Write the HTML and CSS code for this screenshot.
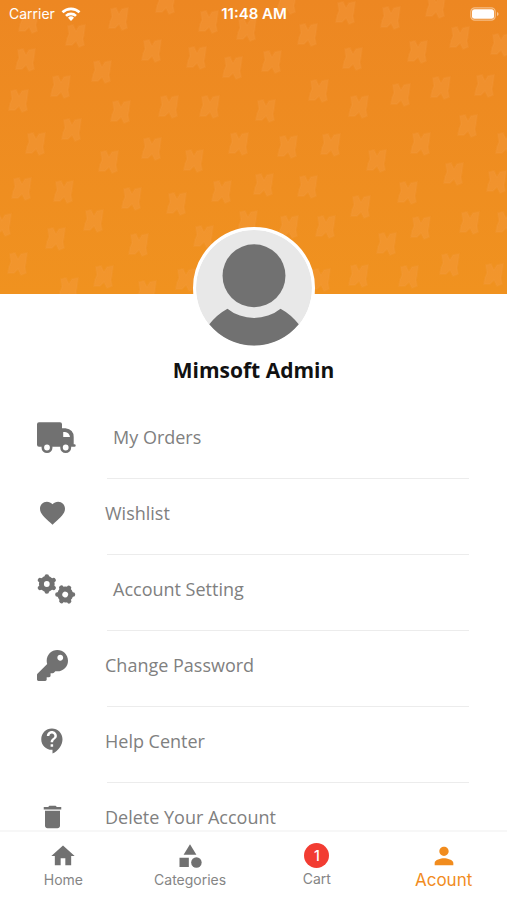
FILE: index.html
```html
<!DOCTYPE html>
<html lang="en">
<head>
<meta charset="utf-8">
<meta name="viewport" content="width=device-width, initial-scale=1">
<title>Account</title>
<link rel="stylesheet" href="styles.css">
</head>
<body>
<div class="app">
  <main class="content">
    <header class="hero">
      <svg class="pattern" viewBox="0 0 507 294" preserveAspectRatio="xMidYMid slice" aria-hidden="true">
        <defs><path id="mark" d="M-7-10L-2-11L1-5L4-10L10-11L9-3L8 3L9 9L4 11L1 5L-3 9L-9 9L-8 3L-6-2Z"/></defs>
        <g id="marks"></g>
      </svg>
      <div class="status">
        <span class="carrier">Carrier
          <svg width="20" height="14" viewBox="0 0 20 14" aria-hidden="true"><g fill="none" stroke="#fff" stroke-width="2.6"><path d="M1.500 5.300a12.200 12.200 0 0 1 17 0"/><path d="M5 8.900a7.200 7.200 0 0 1 10 0"/></g><path fill="#fff" d="M7 10.800a4.300 4.300 0 0 1 6 0L10 14z"/></svg>
        </span>
        <span class="time">11:48 AM</span>
        <svg class="battery" width="29" height="14" viewBox="0 0 29 14" aria-hidden="true"><rect x=".8" y=".8" width="24.4" height="12.4" rx="4" fill="none" stroke="#fff" stroke-opacity=".45" stroke-width="1.2"/><rect x="2" y="2.2" width="22" height="9.6" rx="2.5" fill="#fff"/><path d="M27 5v4q1.600-.5 1.600-2T27 5" fill="#fff" fill-opacity=".5"/></svg>
      </div>
    </header>
    <section class="profile">
      <svg class="avatar" viewBox="-59 -59 118 118" role="img" aria-label="Profile picture"><circle r="59" fill="#e8e8e8"/><g fill="#717171"><circle cy="-12.500" r="32"/><path d="M-45.500 37Q-38 27-27 21A43 43 0 0 0 27 21Q38 27 45.500 37A58.700 58.700 0 0 1-45.500 37Z"/></g></svg>
      <h1>Mimsoft Admin</h1>
    </section>
    <ul class="menu">
      <li><a href="#orders">
        <svg class="wide" viewBox="0 0 39 31" aria-hidden="true"><path fill-rule="evenodd" d="M2 .3H23Q25 .3 25 2.300V6.300H28.500Q36.700 7.500 36.700 15V22.300H37.500Q38.700 22.300 38.700 23.500Q38.700 24.800 37.500 24.800H2Q0 24.800 0 22.800V2.300Q0 .3 2 .3ZM26.200 10V15H33Q32.300 10.600 28 10Z"/><g class="wheel"><circle cx="10" cy="25.500" r="4.200"/><circle cx="28.700" cy="25.500" r="4.200"/></g></svg>
        <span>My Orders</span></a></li>
      <li><a href="#wishlist">
        <svg class="icon" viewBox="0 0 24 24" aria-hidden="true"><path d="M12 21.350l-1.450-1.320C5.400 15.360 2 12.280 2 8.500 2 5.420 4.420 3 7.500 3c1.740 0 3.410.81 4.500 2.090C13.090 3.810 14.760 3 16.500 3 19.580 3 22 5.420 22 8.500c0 3.780-3.400 6.860-8.550 11.540L12 21.350z"/></svg>
        <span>Wishlist</span></a></li>
      <li><a href="#settings">
        <svg class="wide" viewBox="0 0 39 31" aria-hidden="true">
          <defs><g id="gear" fill="none" stroke="#717171"><circle r="5.400" stroke-width="5"/><path stroke-width="4.600" stroke-linecap="round" d="M0-6V-7.500M0 6V7.500M5.200-3L6.700-3.900M5.200 3L6.700 3.900M-5.200-3L-6.700-3.900M-5.200 3L-6.700 3.900"/></g></defs>
          <use href="#gear" x="9.800" y="10"/><use href="#gear" transform="translate(28.200 20.500) rotate(30)"/></svg>
        <span>Account Setting</span></a></li>
      <li><a href="#password">
        <svg class="icon key" viewBox="0 0 512 512" aria-hidden="true"><path d="M512 176.001C512 273.203 433.202 352 336 352c-11.220 0-22.190-1.062-32.827-3.069l-24.012 27.014A23.999 23.999 0 0 1 261.223 384H224v40c0 13.255-10.745 24-24 24h-40v40c0 13.255-10.745 24-24 24H24c-13.255 0-24-10.745-24-24v-78.059c0-6.365 2.529-12.470 7.029-16.971l161.802-161.802C163.108 213.814 160 195.271 160 176 160 78.798 238.797.001 335.999 0 433.488-.001 512 78.511 512 176.001zM336 128c0 26.510 21.490 48 48 48s48-21.490 48-48-21.490-48-48-48-48 21.490-48 48z"/></svg>
        <span>Change Password</span></a></li>
      <li><a href="#help">
        <svg class="icon" viewBox="0 0 24 24" aria-hidden="true"><path d="M11.500 2C6.810 2 3 5.810 3 10.500S6.810 19 11.500 19h.5v3c4.860-2.340 8-7 8-11.500C20 5.810 16.190 2 11.500 2zm1 14.500h-2v-2h2v2zm0-3.500h-2c0-3.250 3-3 3-5 0-1.100-.9-2-2-2s-2 .9-2 2h-2c0-2.210 1.790-4 4-4s4 1.790 4 4c0 2.500-3 2.750-3 5z"/></svg>
        <span>Help Center</span></a></li>
      <li><a href="#delete">
        <svg class="icon" viewBox="0 0 24 24" aria-hidden="true"><path d="M6 19c0 1.100.9 2 2 2h8c1.100 0 2-.9 2-2V7H6v12zM19 4h-3.500l-1-1h-5l-1 1H5v2h14V4z"/></svg>
        <span>Delete Your Account</span></a></li>
    </ul>
  </main>
  <nav class="tabs">
    <a href="#home"><svg viewBox="0 0 24 24" aria-hidden="true"><path d="M10 20v-6h4v6h5v-8h3L12 3 2 12h3v8z"/></svg><span>Home</span></a>
    <a href="#categories"><svg viewBox="0 0 24 24" aria-hidden="true"><path d="M12 2l-5.500 9h11zM3 13.500h8v8H3z"/><circle cx="17.500" cy="17.500" r="4.500"/></svg><span>Categories</span></a>
    <a href="#cart"><b class="count">1</b><span>Cart</span></a>
    <a href="#account" class="active" aria-current="page"><svg viewBox="0 0 24 24" aria-hidden="true"><path d="M12 12c2.210 0 4-1.790 4-4s-1.790-4-4-4-4 1.790-4 4 1.790 4 4 4zm0 2c-2.670 0-8 1.340-8 4v2h16v-2c0-2.660-5.330-4-8-4z"/></svg><span>Acount</span></a>
  </nav>
</div>
<script src="pattern.js"></script>
</body>
</html>
```
FILE: styles.css
```css
* { box-sizing: border-box; }
body { margin: 0; background: #fff; font-family: "Open Sans", sans-serif; color: #757575; }
a { color: inherit; text-decoration: none; }
.app { display: flex; flex-direction: column; height: 100vh; }
.content { flex: 1; min-height: 0; overflow-y: auto; scrollbar-width: none; }
.hero { position: relative; height: 294px; background: linear-gradient(#ed8722, #f0921f); overflow: hidden; }
.pattern { position: absolute; inset: 0; width: 100%; height: 100%; fill: #f7a350; fill-opacity: .28; stroke: #f7a350; stroke-opacity: .12; stroke-width: 2; }
.status { position: relative; display: grid; grid-template-columns: 1fr auto 1fr; align-items: center; height: 28px; padding: 0 8px 0 9px; color: #fff; font: 14px/20px Inter, sans-serif; }
.carrier { display: flex; align-items: center; gap: 6px; }
.time { font-size: 15px; font-weight: 600; }
.battery { justify-self: end; }
.profile { position: relative; display: flex; flex-direction: column; align-items: center; margin-top: -67px; }
.avatar { width: 122px; height: 122px; border: 3px solid #fff; border-radius: 50%; background: #fff; }
h1 { margin: 7px 0 0; color: #111; font-size: 21px; line-height: 28px; font-weight: 700; }
.menu { margin: 0; padding: 19px 0 0; list-style: none; }
.menu a { display: flex; align-items: center; gap: 37px; height: 75px; padding: 0 38px 7px 37px; font-size: 18px; line-height: 24px; color: #808080; }
.menu li:not(:last-child)::after { content: ""; display: block; height: 1px; margin: 0 38px 0 107px; background: #ececec; }
.menu svg { flex: none; fill: #717171; }
.wide { width: 39px; height: 31px; }
.icon { width: 31px; height: 30px; }
.key { height: 31px; }
.wheel { fill: #fff; stroke: #717171; stroke-width: 2.6px; }
.tabs { display: grid; grid-template-columns: repeat(4, 1fr); height: 70px; border-top: 2px solid #f7f7f7; background: #fff; font: 14px/20px Inter, sans-serif; color: #858585; }
.tabs a { display: flex; flex-direction: column; align-items: center; padding-top: 10px; }
.tabs svg { width: 28px; height: 28px; fill: #717171; }
.tabs .active { color: #f18c1e; font-size: 17px; }
.tabs .active svg { fill: #f18c1e; }
.count { display: grid; place-items: center; width: 25px; height: 25px; margin: 1px 0; border-radius: 50%; background: #f23c32; color: #fff; font-weight: 500; }
```
FILE: pattern.js
```js
// Centre of each faint mark on the banner.
const marks = [[28,22],[118,19],[165,3],[75,36],[208,22],[246,30],[25,60],[151,51],[196,58],[232,68],[101,72],[60,87],[18,101],[120,112],[168,107],[209,107],[71,130],[35,144],[151,149],[238,144],[286,3],[345,13],[390,18],[435,7],[307,35],[271,62],[352,59],[417,52],[459,38],[500,45],[318,91],[358,107],[400,95],[440,88],[484,86],[265,111],[467,126],[287,147],[330,145],[420,144],[505,144],[108,162],[193,161],[21,189],[63,192],[131,199],[176,204],[221,192],[93,221],[55,239],[138,245],[203,237],[17,264],[103,277],[68,289],[146,292],[185,280],[1,225],[247,222],[376,161],[453,174],[263,185],[307,187],[407,193],[496,182],[360,207],[288,227],[325,227],[420,228],[469,223],[505,223],[386,244],[320,280],[358,276],[408,277],[449,265],[493,275]];
const group = document.getElementById("marks");
for (const [x, y] of marks) {
  const mark = document.createElementNS("http://www.w3.org/2000/svg", "use");
  mark.setAttribute("href", "#mark");
  mark.setAttribute("x", x);
  mark.setAttribute("y", y);
  group.append(mark);
}
```
